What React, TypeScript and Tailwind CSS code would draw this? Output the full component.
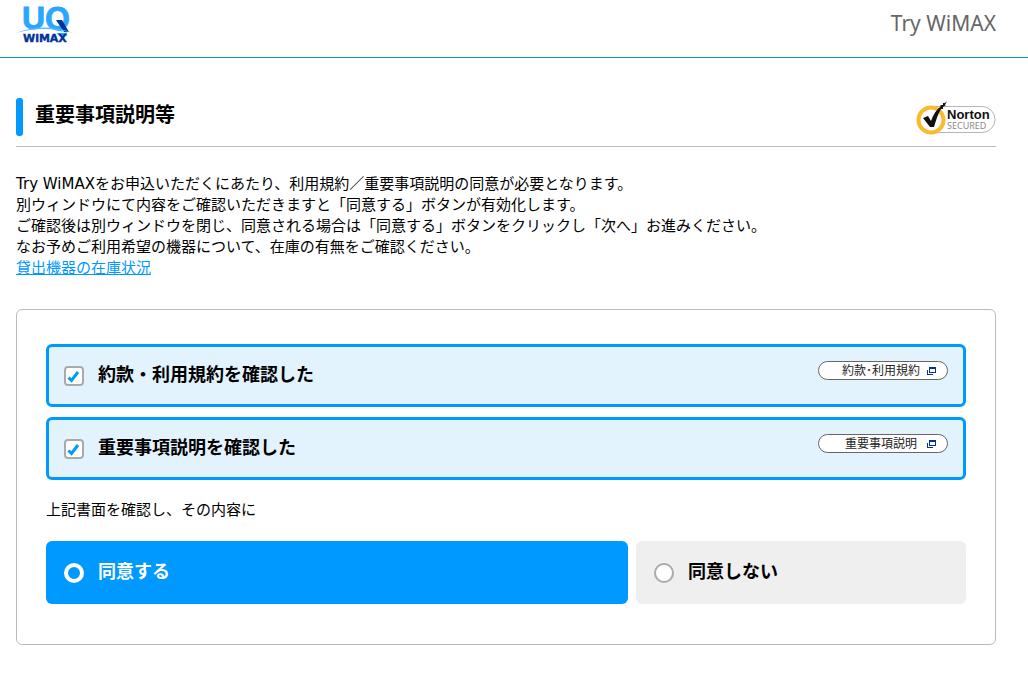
import { useState } from "react";
import type { ReactNode } from "react";

const WINDOW_ICON = (
  <svg width="9" height="9" viewBox="0 0 9 9" aria-hidden="true" className="shrink-0">
    <path d="M0 4h1v4h5v1H0z M2 1h7v6H2z M3 3v3h5V3z" fill="#003399" fillRule="evenodd" />
  </svg>
);

function UqLogo() {
  return (
    <svg width="60" height="46" viewBox="0 0 60 46" role="img" aria-label="UQ WiMAX">
      <text x="6" y="29" fontFamily="Liberation Sans, Arial, sans-serif" fontWeight="700" fontSize="32" fill="#2ba6ff" stroke="#2ba6ff" strokeWidth="0.8">
        UQ
      </text>
      <path d="M40 20h6l7 12h-5z" fill="#003399" />
      <path d="M0 33Q28 22 57 33Q28 25 0 33z" fill="#5cb8ff" />
      <path d="M4 33Q28 26 53 33z" fill="#fff" />
      <text x="7" y="42" fontFamily="DejaVu Sans, Verdana, sans-serif" fontWeight="700" fontSize="11" fill="#003399" stroke="#003399" strokeWidth="0.4">
        WiMAX
      </text>
    </svg>
  );
}

function NortonSeal() {
  return (
    <svg width="80" height="34" viewBox="0 0 80 34" role="img" aria-label="Norton Secured">
      <rect x="8" y="5.5" width="71" height="26" rx="13" fill="#fff" stroke="#b5b5b5" />
      <circle cx="15" cy="19" r="12.5" fill="#fff" stroke="#fdb92e" strokeWidth="4" />
      <path d="M7 17l5-2 3 5C17 14 20 9 25 5l-1-1 3 0 0-2 2 0 2-2-2 4 1 0-3 2 0 2-2 0c-3 5-5 11-7 18h-4z" fill="#111" />
      <text x="31" y="18" fontFamily="Liberation Sans, Arial, sans-serif" fontWeight="700" fontSize="13" fill="#111">
        Norton
      </text>
      <text x="31" y="28" fontFamily="Noto Sans, Arial, sans-serif" fontSize="9" fill="#8a8a8a">
        SECURED
      </text>
    </svg>
  );
}

type CheckRowProps = {
  id: string;
  label: string;
  document: string;
};

function CheckRow({ id, label, document }: CheckRowProps) {
  return (
    <div className="flex h-[63px] items-start justify-between rounded-md border-3 border-[#0099ff] bg-[#e3f3fe] px-[15px]">
      <div className="flex h-full items-center pb-1">
        <span className="grid pt-1">
          <input
            id={id}
            type="checkbox"
            defaultChecked
            className="peer col-start-1 row-start-1 size-5 appearance-none rounded-sm border-2 border-[#aaaaaa] bg-white"
          />
          <svg
            viewBox="0 0 20 20"
            aria-hidden="true"
            className="pointer-events-none invisible col-start-1 row-start-1 size-5 peer-checked:visible"
          >
            <path d="M4.5 11.5L7.5 14.5L14 6" fill="none" stroke="#0099ff" strokeWidth="3" />
          </svg>
        </span>
        <label htmlFor={id} className="pl-[14px] text-lg leading-6 font-bold">
          {label}
        </label>
      </div>
      <button
        type="button"
        className="mt-[14px] flex h-[19px] w-[130px] items-center rounded-full border border-[#666666] bg-white pr-[11px] pl-4 text-xs leading-4 text-[#222222]"
      >
        <span className="flex-1 text-center">{document}</span>
        {WINDOW_ICON}
      </button>
    </div>
  );
}

type ChoiceProps = {
  checked: boolean;
  onSelect: () => void;
  children: ReactNode;
};

function Choice({ checked, onSelect, children }: ChoiceProps) {
  const tone = checked ? "bg-[#0099ff] text-white" : "bg-[#efefef] text-black";
  const ring = checked ? "border-4 border-white bg-[#0099ff]" : "border-2 border-[#aaaaaa] bg-white";
  return (
    <label className={`flex h-[63px] items-center rounded-md px-[18px] pb-[3px] text-lg leading-6 font-bold ${tone}`}>
      <span className="flex pt-[3px]">
        <input
          type="radio"
          name="consent"
          checked={checked}
          onChange={onSelect}
          className={`size-5 appearance-none rounded-full ${ring}`}
        />
      </span>
      <span className="pl-[14px]">{children}</span>
    </label>
  );
}

export default function App() {
  const [agreed, setAgreed] = useState(true);

  return (
    <div className="bg-white font-['Noto_Sans','Noto_Sans_CJK_JP',sans-serif] text-black">
      <header className="flex h-[58px] items-start justify-between border-b border-[#0a8fe8] pr-8 pl-4">
        <a href="#top">
          <UqLogo />
        </a>
        <p className="pt-[9px] text-[21px] leading-7 text-[#666666]">Try WiMAX</p>
      </header>
      <main className="pt-10 pr-8 pb-7 pl-4">
        <div className="flex h-[49px] items-start justify-between border-b border-[#bbbbbb]">
          <div className="flex">
            <span className="h-[38px] w-[7px] rounded-[3px] bg-[#0099ff]" />
            <h1 className="pt-[3px] pl-3 text-xl leading-7 font-bold">重要事項説明等</h1>
          </div>
          <div className="pt-[3px]">
            <NortonSeal />
          </div>
        </div>
        <p className="pt-[27px] font-['DejaVu_Sans','Noto_Sans_CJK_JP',sans-serif] text-[15px] leading-[21px]">
          Try WiMAXをお申込いただくにあたり、利用規約／重要事項説明の同意が必要となります。
          <br />
          別ウィンドウにて内容をご確認いただきますと「同意する」ボタンが有効化します。
          <br />
          ご確認後は別ウィンドウを閉じ、同意される場合は「同意する」ボタンをクリックし「次へ」お進みください。
          <br />
          なお予めご利用希望の機器について、在庫の有無をご確認ください。
          <br />
          <a href="#stock" className="text-[#0099ff] underline">
            貸出機器の在庫状況
          </a>
        </p>
        <form className="mt-[30px] rounded-md border border-[#bbbbbb] px-[29px] pt-[34px] pb-10">
          <div className="flex flex-col gap-[10px]">
            <CheckRow id="terms" label="約款・利用規約を確認した" document="約款･利用規約" />
            <CheckRow id="notes" label="重要事項説明を確認した" document="重要事項説明" />
          </div>
          <p className="pt-[19px] pb-[21px] text-[15px] leading-[21px]">上記書面を確認し、その内容に</p>
          <div className="grid grid-cols-[582fr_330fr] gap-2">
            <Choice checked={agreed} onSelect={() => setAgreed(true)}>
              同意する
            </Choice>
            <Choice checked={!agreed} onSelect={() => setAgreed(false)}>
              同意しない
            </Choice>
          </div>
        </form>
      </main>
    </div>
  );
}
